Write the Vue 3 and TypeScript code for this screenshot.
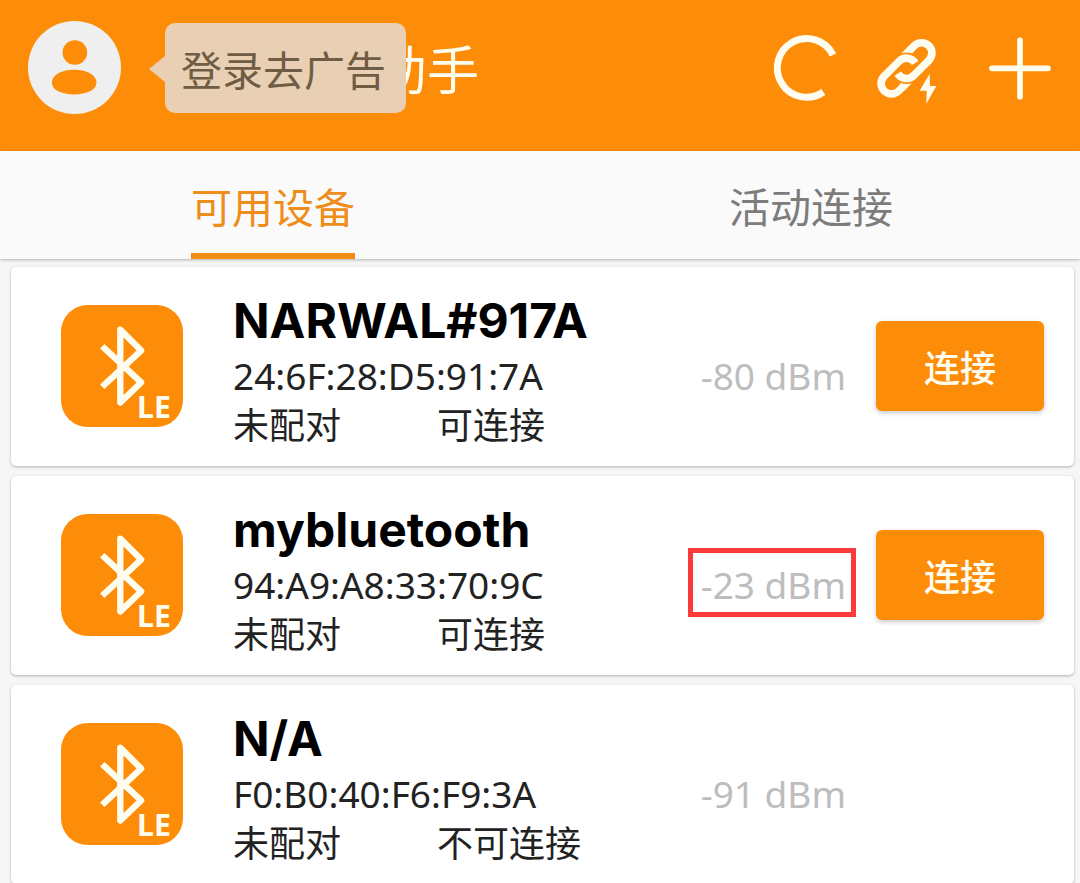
<script setup lang="ts">
import { ref } from 'vue'

interface Device {
  name: string
  mac: string
  paired: string
  state: string
  rssi: number
  connectable: boolean
  marked: boolean
}

const tabs: string[] = ['可用设备', '活动连接']
const active = ref(0)

const linkHalves: string[] = [
  'translate(448 195) rotate(-45)',
  'translate(493 149) rotate(135)',
]

const devices: Device[] = [
  { name: 'NARWAL#917A', mac: '24:6F:28:D5:91:7A', paired: '未配对', state: '可连接', rssi: -80, connectable: true, marked: false },
  { name: 'mybluetooth', mac: '94:A9:A8:33:70:9C', paired: '未配对', state: '可连接', rssi: -23, connectable: true, marked: true },
  { name: 'N/A', mac: 'F0:B0:40:F6:F9:3A', paired: '未配对', state: '不可连接', rssi: -91, connectable: false, marked: false },
]
</script>

<template>
  <div class="page">
    <header class="bar">
      <button class="avatar" type="button" aria-label="登录">
        <svg viewBox="83 63 280 280">
          <circle cx="223" cy="203" r="140" fill="#efefef" />
          <circle cx="224" cy="158" r="37" fill="#fd8c08" />
          <path d="M155 249C155 224 187 210 222 210S289 224 289 249C289 271 260 284 222 284S155 271 155 249Z" fill="#fd8c08" />
        </svg>
      </button>
      <div class="heading">
        <h1 class="title">助手</h1>
        <div class="bubble">登录去广告</div>
      </div>
      <div class="actions">
        <button class="action" type="button" aria-label="扫描">
          <svg viewBox="72 72 198 198">
            <path d="M252 132A88 88 0 1 0 223 243" fill="none" stroke="#fffdf0" stroke-width="21" />
          </svg>
        </button>
        <button class="action" type="button" aria-label="快速连接">
          <svg viewBox="391 72 198 198">
            <g fill="none" stroke-width="23">
              <!-- loose ends, trimmed by the curve of the opposite half -->
              <g v-for="t in linkHalves" :key="t" :transform="t">
                <path d="M17 31H-20" stroke="#fffdf0" />
                <path d="M32 31A31 31 0 0 1 1 0" stroke="#fd8c08" stroke-width="32" />
              </g>
              <path
                v-for="t in linkHalves"
                :key="t"
                :transform="t"
                d="M-11 31H-32A31 31 0 0 1 -32 -31H32A31 31 0 0 1 62 7"
                stroke="#fffdf0"
              />
            </g>
            <path d="M540 188L510 239H531L530 278L560 225H541Z" fill="#fffdf0" />
          </svg>
        </button>
        <button class="action" type="button" aria-label="添加">
          <svg viewBox="711 72 198 198">
            <path d="M726 172H894M810 88V257" fill="none" stroke="#fffdf0" stroke-width="17" stroke-linecap="round" />
          </svg>
        </button>
      </div>
    </header>

    <nav class="tabs">
      <button
        v-for="(tab, i) in tabs"
        :key="tab"
        type="button"
        class="tab"
        :class="{ active: active === i }"
        @click="active = i"
      >
        <span class="tab-label">{{ tab }}</span>
      </button>
    </nav>

    <main class="list">
      <article v-for="d in devices" :key="d.mac" class="card">
        <svg class="badge" viewBox="64 44 364 364" aria-hidden="true">
          <rect x="64" y="44" width="364" height="364" rx="80" fill="#fd8c08" />
          <path d="M187 167L303 275L241 335V118L303 180L187 288" fill="none" stroke="#fffdf0" stroke-width="19" stroke-linejoin="round" />
          <text class="le" x="291" y="380" fill="#fffdf0">LE</text>
        </svg>
        <div class="info">
          <h2 class="name">{{ d.name }}</h2>
          <span class="mac">{{ d.mac }}</span>
          <span class="rssi" :class="{ marked: d.marked }">{{ d.rssi }} dBm</span>
          <div class="status">
            <span class="paired">{{ d.paired }}</span>
            <span>{{ d.state }}</span>
          </div>
        </div>
        <div class="slot">
          <button v-if="d.connectable" class="connect" type="button">连接</button>
        </div>
      </article>
    </main>
  </div>
</template>

<style>
body {
  margin: 0;
  background: #f6f6f6;
}
</style>

<style scoped>
.page {
  display: flex;
  flex-direction: column;
  height: 100vh;
  overflow: hidden;
  font-family: "Noto Sans", "Noto Sans CJK SC", sans-serif;
  color: #222;
}
button {
  margin: 0;
  padding: 0;
  border: 0;
  background: none;
  font: inherit;
  color: inherit;
  cursor: pointer;
}
svg {
  display: block;
  width: 100%;
  height: 100%;
  overflow: visible;
}
.bar {
  flex: none;
  display: flex;
  align-items: center;
  box-sizing: border-box;
  height: 151px;
  padding: 0 27px 16px 28px;
  background: #fd8c08;
}
.avatar {
  width: 93px;
  height: 93px;
}
.heading {
  position: relative;
  flex: 1;
  margin-left: 44px;
}
.title {
  margin: 0;
  padding-left: 210px;
  font: 400 52px/90px "Noto Sans CJK SC", sans-serif;
  color: #fffdf0;
}
.bubble {
  position: absolute;
  left: 0;
  top: 0;
  padding: 0 20px 0 16px;
  border-radius: 10px;
  background: #e9cfb3;
  font: 400 41px/90px "Noto Sans CJK SC", sans-serif;
  color: #6f5c45;
}
.bubble::before {
  content: "";
  position: absolute;
  left: -16px;
  top: 33px;
  border: solid transparent;
  border-width: 13px 16px 13px 0;
  border-right-color: #e9cfb3;
}
.actions {
  display: flex;
  gap: 41px;
}
.action {
  width: 66px;
  height: 66px;
}
.tabs {
  flex: none;
  position: relative;
  z-index: 1;
  display: grid;
  grid-template-columns: 1fr 1fr;
  box-sizing: border-box;
  height: 108px;
  padding-left: 4px;
  background: #fafafa;
  box-shadow: 0 1px 3px rgba(0, 0, 0, 0.28);
}
.tab {
  display: flex;
  justify-content: center;
  font: 400 41px/96px "Noto Sans CJK SC", sans-serif;
  color: #7c7c7c;
}
.tab-label {
  padding-top: 6px;
  border-bottom: 6px solid transparent;
}
.tab.active {
  color: #ee8d1a;
}
.tab.active .tab-label {
  border-color: #f28c13;
}
.list {
  display: flex;
  flex-direction: column;
  gap: 10px;
  padding: 8px 6px 0 11px;
}
.card {
  flex: none;
  display: flex;
  align-items: center;
  padding: 22px 30px 23px 50px;
  border-radius: 5px;
  background: #fff;
  box-shadow: 0 1px 3px rgba(0, 0, 0, 0.28);
}
.badge {
  flex: none;
  width: 122px;
  height: 122px;
}
.le {
  font: 700 90px "Noto Sans", sans-serif;
}
.info {
  flex: 1;
  display: grid;
  grid-template-columns: 1fr auto;
  grid-template-rows: 56px 54px 40px;
  margin: 0 30px 0 50px;
  padding-top: 4px;
}
.name {
  grid-column: 1 / -1;
  margin: 0;
  font: 700 48px/56px Inter, sans-serif;
  color: #000;
}
.mac,
.rssi {
  font-size: 37px;
  line-height: 54px;
}
.rssi {
  position: relative;
  color: #bdbdbd;
}
.rssi.marked::after {
  content: "";
  position: absolute;
  inset: -10px -10px -5px -13px;
  border: 5px solid #fb3b3b;
}
.status {
  grid-column: 1 / -1;
  display: flex;
  font: 400 36px/40px "Noto Sans CJK SC", sans-serif;
}
.paired {
  width: 204px;
}
.slot {
  flex: none;
  width: 168px;
}
.connect {
  display: block;
  width: 100%;
  border-radius: 6px;
  background: #fd8c08;
  box-shadow: 0 2px 5px rgba(0, 0, 0, 0.22);
  font: 500 36px/90px "Noto Sans CJK SC", sans-serif;
  color: #fffdf0;
}
</style>
